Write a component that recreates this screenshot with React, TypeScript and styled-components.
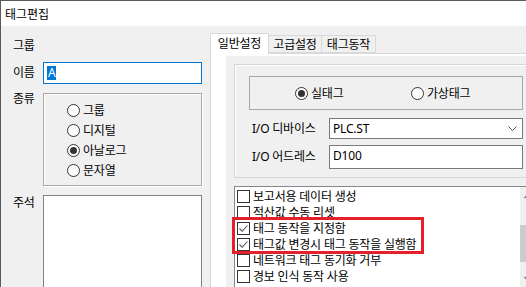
import React from 'react';
import styled, { createGlobalStyle } from 'styled-components';

const GlobalStyle = createGlobalStyle`
  html, body {
    margin: 0;
    padding: 0;
    background: #f0f0f0;
  }
  body {
    font-family: "Noto Sans", "Noto Sans CJK KR", sans-serif;
    font-size: 12px;
    letter-spacing: -0.2px;
    color: #000;
  }
`;

const KIND_LIST = ['그룹', '디지털', '아날로그', '문자열'];
const TAB_MENU = ['일반설정', '고급설정', '태그동작'];
const TAB_WIDTH = [59, 54, 55];
const OPTION_LIST = [
  { label: '보고서용 데이터 생성', checked: false },
  { label: '적산값 수동 리셋', checked: false },
  { label: '태그 동작을 지정함', checked: true },
  { label: '태그값 변경시 태그 동작을 실행함', checked: true },
  { label: '네트워크 태그 동기화 거부', checked: false },
  { label: '경보 인식 동작 사용', checked: false },
];

export default function App() {
  return (
    <>
      <GlobalStyle />
      <Window>
        <TitleBar>태그편집</TitleBar>
        <Body>
          <LeftPane>
            <FieldRow $top={12}>
              <Label>그룹</Label>
            </FieldRow>
            <FieldRow $top={8} $center>
              <Label>이름</Label>
              <NameInput>
                <Selected>A</Selected>
              </NameInput>
            </FieldRow>
            <FieldRow $top={9}>
              <Label $offset={-2}>종류</Label>
              <KindBox>
                {KIND_LIST.map(kind => (
                  <RadioRow key={kind}>
                    <RadioCircle>{kind === '아날로그' && <RadioDot />}</RadioCircle>
                    <span>{kind}</span>
                  </RadioRow>
                ))}
              </KindBox>
            </FieldRow>
            <FieldRow $top={9}>
              <Label>주석</Label>
              <NoteArea />
            </FieldRow>
          </LeftPane>

          <TabControl>
            <TabStrip>
              {TAB_MENU.map((menu, idx) => (
                <Tab key={menu} $active={idx === 0} $width={TAB_WIDTH[idx]}>
                  {menu}
                </Tab>
              ))}
            </TabStrip>
            <TabPage>
              <GrayPanel>
                <InnerPanel>
                  <TypeBox>
                    <RadioRow $width={116}>
                      <RadioCircle>
                        <RadioDot />
                      </RadioCircle>
                      <span>실태그</span>
                    </RadioRow>
                    <RadioRow>
                      <RadioCircle />
                      <span>가상태그</span>
                    </RadioRow>
                  </TypeBox>
                  <FormGrid>
                    <FormLabel>I/O 디바이스</FormLabel>
                    <Combo>
                      <span>PLC.ST</span>
                      <svg width="9" height="6" viewBox="0 0 9 6">
                        <path d="M0.5 0.5 L4.5 4.5 L8.5 0.5" fill="none" stroke="#555" strokeWidth="1" />
                      </svg>
                    </Combo>
                    <FormLabel>I/O 어드레스</FormLabel>
                    <AddressInput>D100</AddressInput>
                  </FormGrid>
                </InnerPanel>

                <ListBox>
                  <ListItems>
                    {OPTION_LIST.map(item => (
                      <ListItem key={item.label}>
                        <CheckBox>
                          {item.checked && (
                            <svg width="11" height="11" viewBox="0 0 11 11">
                              <path d="M1.5 5.5 L4.2 8.2 L9.5 2.5" fill="none" stroke="#5a5a5a" strokeWidth="1.1" />
                            </svg>
                          )}
                        </CheckBox>
                        <span>{item.label}</span>
                      </ListItem>
                    ))}
                    <Highlight />
                  </ListItems>
                  <ScrollBar>
                    <ScrollButton>
                      <svg width="9" height="6" viewBox="0 0 9 6">
                        <path d="M0.5 5 L4.5 1 L8.5 5" fill="none" stroke="#606060" strokeWidth="1.2" />
                      </svg>
                    </ScrollButton>
                    <ScrollTrack>
                      <ScrollThumb />
                    </ScrollTrack>
                    <ScrollButton>
                      <svg width="9" height="6" viewBox="0 0 9 6">
                        <path d="M0.5 1 L4.5 5 L8.5 1" fill="none" stroke="#606060" strokeWidth="1.2" />
                      </svg>
                    </ScrollButton>
                  </ScrollBar>
                </ListBox>
              </GrayPanel>
            </TabPage>
          </TabControl>
        </Body>
      </Window>
    </>
  );
}

const Window = styled.div`
  width: 526px;
  height: 287px;
  box-sizing: border-box;
  border-top: 1px solid #5a5a5a;
  border-left: 1px solid #5a5a5a;
  overflow: hidden;
  display: flex;
  flex-direction: column;
  background: #f0f0f0;
`;

const TitleBar = styled.div`
  height: 25px;
  flex-shrink: 0;
  background: #fff;
  padding-left: 4px;
  display: flex;
  align-items: center;
  font-size: 12px;
  letter-spacing: 0;
`;

const Body = styled.div`
  flex: 1;
  display: flex;
  min-height: 0;
`;

const LeftPane = styled.div`
  width: 209px;
  flex-shrink: 0;
  box-sizing: border-box;
  padding-left: 12px;
  display: flex;
  flex-direction: column;
`;

const FieldRow = styled.div<{ $top: number; $center?: boolean }>`
  display: flex;
  align-items: ${({ $center }) => ($center ? 'center' : 'flex-start')};
  margin-top: ${({ $top }) => $top}px;
`;

const Label = styled.div<{ $offset?: number }>`
  width: 30px;
  flex-shrink: 0;
  line-height: 16px;
  margin-top: ${({ $offset }) => $offset || 0}px;
`;

const NameInput = styled.div`
  width: 159px;
  height: 22px;
  box-sizing: border-box;
  border: 1px solid #0078d7;
  background: #fff;
  padding-left: 3px;
  display: flex;
  align-items: center;
`;

const Selected = styled.span`
  background: #0078d7;
  color: #fff;
  line-height: 14px;
  padding: 0 1px;
`;

const KindBox = styled.div`
  width: 159px;
  height: 93px;
  box-sizing: border-box;
  border: 1px solid #a8a8a8;
  box-shadow: inset 1px 1px 0 #fff, 1px 1px 0 #fff;
  padding: 6px 0 0 23px;
`;

const RadioRow = styled.div<{ $width?: number }>`
  display: flex;
  align-items: center;
  gap: 3px;
  height: 20px;
  width: ${({ $width }) => ($width ? `${$width}px` : 'auto')};
`;

const RadioCircle = styled.div`
  width: 13px;
  height: 13px;
  flex-shrink: 0;
  box-sizing: border-box;
  border: 1px solid #333;
  border-radius: 50%;
  background: #fff;
  display: flex;
  align-items: center;
  justify-content: center;
`;

const RadioDot = styled.div`
  width: 7px;
  height: 7px;
  border-radius: 50%;
  background: #333;
`;

const NoteArea = styled.div`
  width: 159px;
  height: 110px;
  box-sizing: border-box;
  border: 1px solid #828282;
  background: #fff;
`;

const TabControl = styled.div`
  width: 340px;
  flex-shrink: 0;
  display: flex;
  flex-direction: column;
`;

const TabStrip = styled.div`
  height: 27px;
  display: flex;
  align-items: flex-end;
  flex-shrink: 0;
`;

const Tab = styled.div<{ $active: boolean; $width: number }>`
  position: relative;
  z-index: 1;
  width: ${({ $width }) => $width}px;
  height: ${({ $active }) => ($active ? 21 : 18)}px;
  margin-bottom: ${({ $active }) => ($active ? -1 : 0)}px;
  box-sizing: border-box;
  border: 1px solid #d9d9d9;
  border-bottom: ${({ $active }) => ($active ? 'none' : '1px solid #d9d9d9')};
  margin-left: ${({ $active }) => ($active ? 0 : -1)}px;
  background: ${({ $active }) => ($active ? '#fff' : '#f0f0f0')};
  display: flex;
  align-items: center;
  justify-content: center;
  padding-bottom: ${({ $active }) => ($active ? 2 : 0)}px;
`;

const TabPage = styled.div`
  flex: 1;
  background: #fff;
  border-top: 1px solid #d9d9d9;
  border-left: 1px solid #d9d9d9;
  padding: 2px 0 0 15px;
  display: flex;
  flex-direction: column;
`;

const GrayPanel = styled.div`
  flex: 1;
  background: #f0f0f0;
  padding: 8px 0 0 8px;
  display: flex;
  flex-direction: column;
`;

const InnerPanel = styled.div`
  width: 304px;
  height: 114px;
  box-sizing: border-box;
  border: 1px solid #d5d5d5;
  box-shadow: inset 1px 1px 0 #fff;
  padding: 11px 0 0 14px;
`;

const TypeBox = styled.div`
  width: 274px;
  height: 34px;
  box-sizing: border-box;
  border: 1px solid #a8a8a8;
  display: flex;
  align-items: center;
  padding-left: 45px;
`;

const FormGrid = styled.div`
  display: grid;
  grid-template-columns: 77px 194px;
  grid-template-rows: 21px 24px;
  row-gap: 6px;
  align-items: center;
  margin: 8px 0 0 3px;
`;

const FormLabel = styled.div`
  line-height: 16px;
`;

const Combo = styled.div`
  height: 21px;
  box-sizing: border-box;
  border: 1px solid #7a7a7a;
  background: #fff;
  display: flex;
  align-items: center;
  justify-content: space-between;
  padding: 0 5px 0 3px;
`;

const AddressInput = styled.div`
  height: 24px;
  box-sizing: border-box;
  border: 1px solid #7a7a7a;
  background: #fff;
  padding: 1px 0 0 3px;
`;

const ListBox = styled.div`
  width: 304px;
  height: 102px;
  margin-top: 8px;
  box-sizing: border-box;
  border: 1px solid #828790;
  background: #fff;
  display: flex;
`;

const ListItems = styled.div`
  position: relative;
  flex: 1;
  padding: 1px 0 0 2px;
`;

const ListItem = styled.div`
  height: 16px;
  display: flex;
  align-items: center;
  gap: 3px;
  white-space: nowrap;
`;

const CheckBox = styled.div`
  width: 13px;
  height: 13px;
  flex-shrink: 0;
  box-sizing: border-box;
  border: 1px solid #333;
  background: #fff;
  display: flex;
  align-items: center;
  justify-content: center;
`;

const Highlight = styled.div`
  position: absolute;
  left: -3px;
  top: 30px;
  width: 192px;
  height: 37px;
  box-sizing: border-box;
  border: 3px solid #e5202a;
`;

const ScrollBar = styled.div`
  width: 17px;
  flex-shrink: 0;
  background: #f0f0f0;
  display: flex;
  flex-direction: column;
`;

const ScrollButton = styled.div`
  height: 17px;
  display: flex;
  align-items: center;
  justify-content: center;
`;

const ScrollTrack = styled.div`
  flex: 1;
  padding-top: 21px;
`;

const ScrollThumb = styled.div`
  height: 37px;
  background: #cdcdcd;
`;
